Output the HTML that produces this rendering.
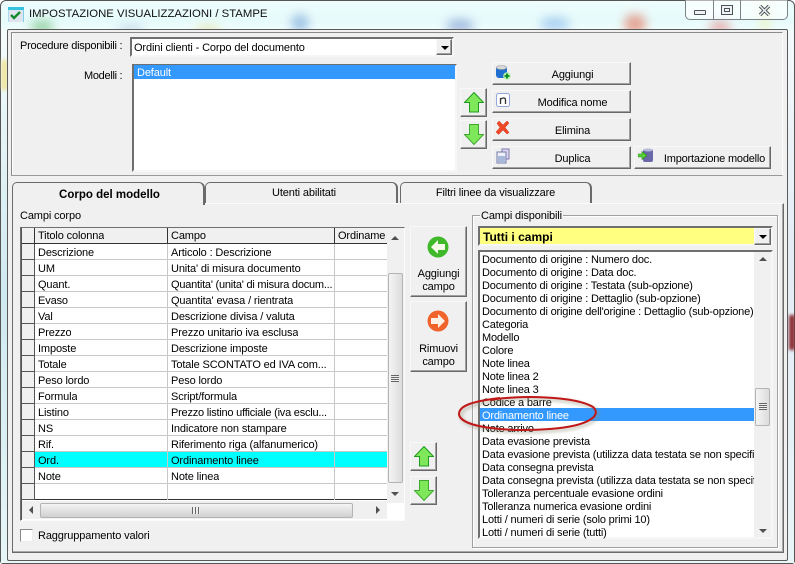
<!DOCTYPE html>
<html><head><meta charset="utf-8"><style>
*{box-sizing:border-box}
html,body{margin:0;padding:0}
body{width:795px;height:564px;position:relative;overflow:hidden;background:#fff;font:11px/13px "Liberation Sans",sans-serif;letter-spacing:-.13px;color:#000}
.a{position:absolute}
.t{position:absolute;white-space:nowrap;overflow:hidden}
.btn{position:absolute;background:#f0f0f0;border:1px solid;border-color:#f8f8f8 #696969 #696969 #f8f8f8;box-shadow:inset -1px -1px 0 #a0a0a0;text-align:center}
.sunk{position:absolute;border:2px solid;border-color:#6f6f6f #f6f6f6 #f6f6f6 #6f6f6f;background:#fff}
.r{position:absolute;left:22px;width:365px;height:16px;border-bottom:1px solid #c8c8c8}
.r i{position:absolute;left:0;top:0;width:13px;height:16px;background:#f0f0f0;border-bottom:1px solid #555;border-right:1px solid #555}
.r b{position:absolute;top:0;width:1px;height:16px;background:#c8c8c8}
.r span{position:absolute;top:2.500px;white-space:nowrap;overflow:hidden}
.l{position:absolute;left:480px;width:274px;height:16px;line-height:17px;padding-left:2px;white-space:nowrap;overflow:hidden;letter-spacing:-.18px}
.tab{position:absolute;top:182px;height:21px;background:#f0f0f0;border:1px solid #6a6a6a;border-bottom:0;border-radius:5px 6px 0 0;text-align:center;line-height:21px;border-right-width:2px}
</style></head><body>
<!-- aero frame -->
<div class="a" style="left:0;top:0;width:795px;height:564px;border:1px solid #555;border-radius:6px 6px 3px 3px;background:linear-gradient(180deg,#eefcfc 0,#e6fbfb 20px,#f2fdfd 30px);"></div>
<svg class="a" style="left:0;top:0" width="795" height="32">
<g style="filter:blur(5px)" opacity=".5">
<ellipse cx="42" cy="27" rx="12" ry="7" fill="#4fb05a"/>
<ellipse cx="130" cy="29" rx="14" ry="4" fill="#9bb8d8"/>
<ellipse cx="208" cy="29" rx="12" ry="4" fill="#e0d070"/>
<ellipse cx="300" cy="23" rx="9" ry="9" fill="#5a8fd0"/>
<ellipse cx="460" cy="26" rx="14" ry="7" fill="#6080c8"/>
<ellipse cx="555" cy="24" rx="15" ry="7" fill="#70a8e8"/>
<ellipse cx="635" cy="24" rx="11" ry="10" fill="#e05030"/>
<ellipse cx="720" cy="27" rx="11" ry="6" fill="#e06060"/>
<rect x="762" y="4" width="6" height="28" fill="#f0e870"/>
</g></svg>
<div class="a" style="left:1px;top:30px;width:7px;height:532px;background:linear-gradient(180deg,#f4fbfb,#cfe9f0 50%,#e6f6f8)"></div>
<div class="a" style="left:2px;top:60px;width:5px;height:30px;background:#efe08a;filter:blur(2px)"></div>
<div class="a" style="left:787px;top:30px;width:7px;height:532px;background:linear-gradient(180deg,#f2fafc,#e4ecf6 40%,#e8f4f8)"></div>
<div class="a" style="left:789px;top:315px;width:6px;height:35px;background:#8a2a30;filter:blur(1.5px)"></div>
<div class="a" style="left:1px;top:561px;width:793px;height:2px;background:#e8f6f8"></div>

<!-- title icon + text -->
<svg class="a" style="left:8px;top:7px" width="16" height="15" viewBox="0 0 16 15">
<rect width="16" height="15" fill="#dfe4ee"/><rect width="16" height="3" fill="#35c4e0"/>
<path d="M0 3V15M15.500 3V15" stroke="#7fd0e8"/>
<path d="M3 8l3 3 6-6" fill="none" stroke="#138a2c" stroke-width="2.400"/></svg>
<div class="t" style="left:29px;top:7px;font-size:11.350px;letter-spacing:0;line-height:15px;color:#111">IMPOSTAZIONE VISUALIZZAZIONI / STAMPE</div>

<!-- caption buttons -->
<div class="a" style="left:685px;top:0;width:103px;height:20px;background:rgba(255,255,255,.55);border:1px solid #7a8288;border-top:0;border-radius:0 0 5px 5px"></div>
<div class="a" style="left:713px;top:0;width:1px;height:19px;background:#7a8288"></div>
<div class="a" style="left:740px;top:0;width:1px;height:19px;background:#7a8288"></div>
<div class="a" style="left:694px;top:10px;width:12px;height:5px;background:#eef2f4;border:1px solid #4d5258;border-radius:1px"></div>
<div class="a" style="left:721px;top:5px;width:12px;height:10px;background:#eef2f4;border:1px solid #4d5258"></div>
<div class="a" style="left:724px;top:8px;width:6px;height:4px;border:1px solid #4d5258"></div>
<svg class="a" style="left:758px;top:5px" width="13" height="11"><path d="M2 1l9 9M11 1l-9 9" stroke="#4d5258" stroke-width="3.400"/><path d="M2 1l9 9M11 1l-9 9" stroke="#eef2f4" stroke-width="1.400"/></svg>

<!-- client -->
<div class="a" style="left:7px;top:29px;width:781px;height:532px;background:#f0f0f0;border:1px solid #5a5a5a;border-radius:2px"></div>
<div class="a" style="left:11px;top:32px;width:772px;height:144px;border:1px solid;border-color:#8a8a8a #fbfbfb #9a9a9a #8a8a8a;box-shadow:inset 1px 0 0 #fff"></div>

<div class="t" style="left:20px;top:40px;letter-spacing:-.26px">Procedure disponibili :</div>
<div class="sunk" style="left:130px;top:37px;width:324px;height:20px"></div>
<div class="t" style="left:134px;top:41px;line-height:15px">Ordini clienti - Corpo del documento</div>
<div class="btn" style="left:436px;top:39px;width:16px;height:16px"></div>
<div class="a" style="left:441px;top:46px;border:4px solid transparent;border-top:4px solid #000;border-bottom:0"></div>

<div class="t" style="left:84px;top:70px;letter-spacing:-.3px">Modelli :</div>
<div class="sunk" style="left:132px;top:64px;width:325px;height:108px"></div>
<div class="a" style="left:134px;top:65px;width:321px;height:14px;background:#3399ff"></div>
<div class="t" style="left:137px;top:67px;color:#fff">Default</div>

<!-- buttons top -->
<div class="btn" style="left:492px;top:62px;width:139px;height:23px;line-height:24px;padding-left:22px">Aggiungi</div>
<div class="btn" style="left:492px;top:90px;width:139px;height:23px;line-height:24px;padding-left:22px">Modifica nome</div>
<div class="btn" style="left:492px;top:118px;width:139px;height:23px;line-height:24px;padding-left:22px">Elimina</div>
<div class="btn" style="left:492px;top:146px;width:139px;height:23px;line-height:24px;padding-left:22px">Duplica</div>
<div class="btn" style="left:634px;top:146px;width:137px;height:23px;line-height:24px;padding-left:24px;letter-spacing:-.2px">Importazione modello</div>
<svg class="a" style="left:496px;top:65px" width="15" height="15" viewBox="0 0 15 15">
<rect x="0" y="1" width="11" height="12" rx="3" fill="#1f6fd0"/><ellipse cx="5.500" cy="2.500" rx="5" ry="2" fill="#d8d8d8" stroke="#999" stroke-width=".6"/>
<circle cx="11" cy="11" r="3.800" fill="#b8f0b0"/><path d="M11 8.500v5M8.500 11h5" stroke="#0b8a20" stroke-width="1.800"/></svg>
<svg class="a" style="left:496px;top:93px" width="14" height="14"><rect x=".5" y=".5" width="13" height="13" rx="2" fill="#fff" stroke="#93a8d8"/><path d="M4.500 11V5M4.500 6.500q1-1.500 3-1.500t2 2V11" fill="none" stroke="#333" stroke-width="1.300"/></svg>
<svg class="a" style="left:496px;top:120px" width="14" height="15" viewBox="0 0 14 15"><path d="M3 1l4 4 4-4 2 2-4 4.500 4 5-2 1.500-4-4-4.500 4.500L0 12l4-4.500-3-4z" fill="#ee4a28" stroke="#d03018" stroke-width=".5"/></svg>
<svg class="a" style="left:496px;top:148px" width="14" height="16" viewBox="0 0 14 16"><rect x="6" y="1" width="7" height="10" fill="#dcd8f0" stroke="#8278b0"/><rect x="1" y="4" width="9" height="11" fill="#eef0f8" stroke="#7078a8"/><path d="M2 8h7v6H2z" fill="#a8b8d8"/></svg>
<svg class="a" style="left:638px;top:148px" width="16" height="15" viewBox="0 0 16 15"><rect x="5" y="1" width="10" height="13" rx="2" fill="#6a68a8"/><ellipse cx="10" cy="2" rx="5" ry="1.500" fill="#b8b8d8"/><path d="M0 6h4V3.500L9 7.500 4 11.500V9H0z" fill="#58d038" stroke="#208a18" stroke-width=".6"/></svg>

<!-- arrow small buttons -->
<div class="btn" style="left:460px;top:88px;width:27px;height:29px"></div>
<div class="btn" style="left:460px;top:120px;width:27px;height:29px"></div>
<svg class="a" style="left:464px;top:92px" width="20" height="21"><path d="M10 .5L19.500 10.500H14.500V20H5.500V10.500H.5z" fill="#7fe85a" stroke="#1f9a1f"/></svg>
<svg class="a" style="left:464px;top:124px" width="20" height="21"><path d="M5.500 .5H14.500V10.500H19.500L10 20.500 .5 10.500H5.500z" fill="#7fe85a" stroke="#3fa82f"/></svg>

<!-- tabs -->
<div class="a" style="left:12px;top:203px;width:772px;height:350px;border:1px solid;border-color:#fbfbfb #6a6a6a #6a6a6a #6a6a6a;box-shadow:inset -1px -1px 0 #a8a8a8"></div>
<div class="tab" style="left:205px;width:193px;padding-left:6px">Utenti abilitati</div>
<div class="tab" style="left:400px;width:192px">Filtri linee da visualizzare</div>
<div class="tab" style="left:12px;width:193px;height:23px;z-index:2;font-weight:bold;font-size:11.500px;letter-spacing:0;line-height:24px;padding-left:3px;border-bottom:0">Corpo del modello</div>

<div class="t" style="left:20px;top:210px">Campi corpo</div>

<!-- grid -->
<div class="a" style="left:20px;top:227px;width:385px;height:294px;background:#fff;border:1px solid;border-color:#6f6f6f #fbfbfb #fbfbfb #6f6f6f;box-shadow:inset 1px 1px 0 #555"></div>
<div class="a" style="left:22px;top:228px;width:365px;height:16px;background:#f0f0f0;border-bottom:1px solid #333"></div>
<div class="a" style="left:34px;top:228px;width:1px;height:16px;background:#333"></div>
<div class="a" style="left:167px;top:228px;width:1px;height:16px;background:#333"></div>
<div class="a" style="left:334px;top:228px;width:1px;height:16px;background:#333"></div>
<div class="t" style="left:38px;top:230px">Titolo colonna</div>
<div class="t" style="left:171px;top:230px">Campo</div>
<div class="t" style="left:338px;top:230px;width:48px">Ordinamento</div>

<div class="r" style="top:244px"><i></i><b style="left:145px"></b><b style="left:312px"></b><span style="left:16px">Descrizione</span><span style="left:149px">Articolo : Descrizione</span></div>
<div class="r" style="top:260px"><i></i><b style="left:145px"></b><b style="left:312px"></b><span style="left:16px">UM</span><span style="left:149px">Unita' di misura documento</span></div>
<div class="r" style="top:276px"><i></i><b style="left:145px"></b><b style="left:312px"></b><span style="left:16px">Quant.</span><span style="left:149px;width:163px;letter-spacing:-.22px">Quantita' (unita' di misura docum...</span></div>
<div class="r" style="top:292px"><i></i><b style="left:145px"></b><b style="left:312px"></b><span style="left:16px">Evaso</span><span style="left:149px">Quantita' evasa / rientrata</span></div>
<div class="r" style="top:308px"><i></i><b style="left:145px"></b><b style="left:312px"></b><span style="left:16px">Val</span><span style="left:149px">Descrizione divisa / valuta</span></div>
<div class="r" style="top:324px"><i></i><b style="left:145px"></b><b style="left:312px"></b><span style="left:16px">Prezzo</span><span style="left:149px">Prezzo unitario iva esclusa</span></div>
<div class="r" style="top:340px"><i></i><b style="left:145px"></b><b style="left:312px"></b><span style="left:16px">Imposte</span><span style="left:149px">Descrizione imposte</span></div>
<div class="r" style="top:356px"><i></i><b style="left:145px"></b><b style="left:312px"></b><span style="left:16px">Totale</span><span style="left:149px;width:163px">Totale SCONTATO ed IVA com...</span></div>
<div class="r" style="top:372px"><i></i><b style="left:145px"></b><b style="left:312px"></b><span style="left:16px">Peso lordo</span><span style="left:149px">Peso lordo</span></div>
<div class="r" style="top:388px"><i></i><b style="left:145px"></b><b style="left:312px"></b><span style="left:16px">Formula</span><span style="left:149px">Script/formula</span></div>
<div class="r" style="top:404px"><i></i><b style="left:145px"></b><b style="left:312px"></b><span style="left:16px">Listino</span><span style="left:149px;width:163px;letter-spacing:-.22px">Prezzo listino ufficiale (iva esclu...</span></div>
<div class="r" style="top:420px"><i></i><b style="left:145px"></b><b style="left:312px"></b><span style="left:16px">NS</span><span style="left:149px">Indicatore non stampare</span></div>
<div class="r" style="top:436px"><i></i><b style="left:145px"></b><b style="left:312px"></b><span style="left:16px">Rif.</span><span style="left:149px">Riferimento riga (alfanumerico)</span></div>
<div class="r" style="top:452px;background:#00ffff"><i></i><b style="left:145px"></b><b style="left:312px"></b><span style="left:16px">Ord.</span><span style="left:149px">Ordinamento linee</span></div>
<div class="r" style="top:468px"><i></i><b style="left:145px"></b><b style="left:312px"></b><span style="left:16px">Note</span><span style="left:149px">Note linea</span></div>
<div class="r" style="top:484px;border-bottom:1px solid #333"><i></i><b style="left:145px"></b><b style="left:312px"></b></div>

<!-- grid scrollbars -->
<div class="a" style="left:387px;top:228px;width:17px;height:275px;background:#f0f0f0"></div>
<div class="a" style="left:391px;top:236px;border:4px solid transparent;border-bottom:4px solid #505050;border-top:0"></div>
<div class="a" style="left:391px;top:492px;border:4px solid transparent;border-top:4px solid #505050;border-bottom:0"></div>
<div class="a" style="left:388px;top:273px;width:15px;height:210px;border:1px solid #b4b4b4;border-radius:2px;background:linear-gradient(90deg,#f4f4f4,#dcdcdc)"></div>
<div class="a" style="left:391px;top:375px;width:8px;height:7px;background:repeating-linear-gradient(180deg,#666 0,#666 1px,#eee 1px,#eee 2px)"></div>
<div class="a" style="left:22px;top:501px;width:365px;height:18px;background:#f0f0f0"></div>
<div class="a" style="left:29px;top:506px;border:4px solid transparent;border-right:4px solid #505050;border-left:0"></div>
<div class="a" style="left:376px;top:506px;border:4px solid transparent;border-left:4px solid #505050;border-right:0"></div>
<div class="a" style="left:40px;top:503px;width:313px;height:15px;border:1px solid #b4b4b4;border-radius:2px;background:linear-gradient(180deg,#f4f4f4,#d0d0d0)"></div>
<div class="a" style="left:192px;top:507px;width:8px;height:7px;background:repeating-linear-gradient(90deg,#666 0,#666 1px,#eee 1px,#eee 3px)"></div>

<!-- checkbox -->
<div class="a" style="left:20px;top:529px;width:13px;height:13px;background:#fff;border:1px solid;border-color:#888 #eee #eee #888"></div>
<div class="t" style="left:38px;top:530px">Raggruppamento valori</div>

<!-- add/remove -->
<div class="btn" style="left:410px;top:226px;width:57px;height:71px;padding-top:41px">Aggiungi<br>campo</div>
<div class="btn" style="left:410px;top:301px;width:57px;height:71px;padding-top:41px">Rimuovi<br>campo</div>
<svg class="a" style="left:427px;top:236px" width="22" height="22"><circle cx="11" cy="11" r="10.500" fill="#3fb82a"/><path d="M11 4L4 11l7 7v-4h7V8h-7z" fill="#f4fbe8"/></svg>
<svg class="a" style="left:427px;top:310px" width="22" height="22"><circle cx="11" cy="11" r="10.500" fill="#f0642c"/><path d="M11 4l7 7-7 7v-4H4V8h7z" fill="#fdf0e4"/></svg>
<div class="btn" style="left:410px;top:442px;width:27px;height:29px"></div>
<div class="btn" style="left:410px;top:476px;width:27px;height:29px"></div>
<svg class="a" style="left:414px;top:446px" width="20" height="21"><path d="M10 .5L19.500 10.500H14.500V20H5.500V10.500H.5z" fill="#7fe85a" stroke="#1f9a1f"/></svg>
<svg class="a" style="left:414px;top:480px" width="20" height="21"><path d="M5.500 .5H14.500V10.500H19.500L10 20.500 .5 10.500H5.500z" fill="#7fe85a" stroke="#3fa82f"/></svg>

<!-- group -->
<div class="a" style="left:472px;top:215px;width:306px;height:333px;border:1px solid #a0a0a0;box-shadow:1px 1px 0 #fff,inset 1px 1px 0 #fff"></div>
<div class="t" style="left:480px;top:210px;background:#f0f0f0;padding:0 1px">Campi disponibili</div>
<div class="sunk" style="left:478px;top:226px;width:295px;height:20px;background:#ffff80"></div>
<div class="t" style="left:483px;top:231px;font-weight:bold;font-size:12px;letter-spacing:0">Tutti i campi</div>
<div class="btn" style="left:754px;top:228px;width:17px;height:17px"></div>
<div class="a" style="left:759px;top:235px;border:4px solid transparent;border-top:4px solid #000;border-bottom:0"></div>

<div class="sunk" style="left:478px;top:250px;width:295px;height:289px"></div>
<div class="a" style="left:480px;top:408px;width:274px;height:13px;background:#3399ff"></div>
<div class="l" style="top:252px">Documento di origine : Numero doc.</div>
<div class="l" style="top:265px">Documento di origine : Data doc.</div>
<div class="l" style="top:278px">Documento di origine : Testata (sub-opzione)</div>
<div class="l" style="top:291px">Documento di origine : Dettaglio (sub-opzione)</div>
<div class="l" style="top:304px">Documento di origine dell'origine : Dettaglio (sub-opzione)</div>
<div class="l" style="top:317px">Categoria</div>
<div class="l" style="top:330px">Modello</div>
<div class="l" style="top:343px">Colore</div>
<div class="l" style="top:356px">Note linea</div>
<div class="l" style="top:369px">Note linea 2</div>
<div class="l" style="top:382px">Note linea 3</div>
<div class="l" style="top:395px">Codice a barre</div>
<div class="l" style="top:408px;color:#fff">Ordinamento linee</div>
<div class="l" style="top:421px">Note arrivo</div>
<div class="l" style="top:434px">Data evasione prevista</div>
<div class="l" style="top:447px">Data evasione prevista (utilizza data testata se non specificata)</div>
<div class="l" style="top:460px">Data consegna prevista</div>
<div class="l" style="top:473px">Data consegna prevista (utilizza data testata se non specificata)</div>
<div class="l" style="top:486px">Tolleranza percentuale evasione ordini</div>
<div class="l" style="top:499px">Tolleranza numerica evasione ordini</div>
<div class="l" style="top:512px">Lotti / numeri di serie (solo primi 10)</div>
<div class="l" style="top:525px;height:14px">Lotti / numeri di serie (tutti)</div>

<div class="a" style="left:754px;top:252px;width:17px;height:285px;background:#f0f0f0"></div>
<div class="a" style="left:759px;top:257px;border:4px solid transparent;border-bottom:4px solid #505050;border-top:0"></div>
<div class="a" style="left:759px;top:529px;border:4px solid transparent;border-top:4px solid #505050;border-bottom:0"></div>
<div class="a" style="left:755px;top:388px;width:15px;height:38px;border:1px solid #b4b4b4;border-radius:2px;background:linear-gradient(90deg,#f4f4f4,#dcdcdc)"></div>
<div class="a" style="left:759px;top:403px;width:8px;height:7px;background:repeating-linear-gradient(180deg,#666 0,#666 1px,#eee 1px,#eee 2px)"></div>

<!-- red ellipse -->
<svg class="a" style="left:450px;top:390px" width="160" height="50">
<path d="M40 12C70 7 125 8 145 19 154 27 142 38 102 41 62 44 12 40 11 26 11 17 27 13 52 10" fill="none" stroke="#8a8a70" stroke-width="3" opacity=".45" style="filter:blur(1.500px)"/>
<path d="M40 10C70 5 125 6 143 17 152 25 140 36 100 39 60 42 10 38 9 24 9 15 25 11 50 8" fill="none" stroke="#c01818" stroke-width="2"/>
</svg>
</body></html>
